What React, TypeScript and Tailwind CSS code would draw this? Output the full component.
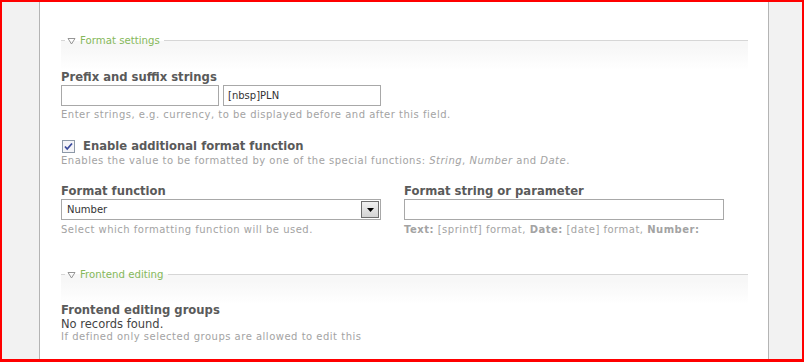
import React from 'react';

const font = { fontFamily: '"DejaVu Sans", Verdana, sans-serif' };

function Legend({ title }: { title: string }) {
  return (
    <div>
      <div className="flex items-center h-[13px] bg-[linear-gradient(to_bottom,transparent_50%,#f7f7f7_50%)]">
        <span className="w-[4px] h-px bg-[#d6d6d6]" />
        <svg width="9" height="8" viewBox="0 0 9 8" className="ml-[2px] mr-[4px]">
          <polygon points="1,1.5 8,1.5 4.5,7" fill="none" stroke="#8a8a8a" strokeWidth="0.9" />
        </svg>
        <span className="text-[10.2px] leading-[13px] text-[#86b85a] pr-[4px]">{title}</span>
        <span className="flex-1 h-px bg-[#d6d6d6]" />
      </div>
      <div className="h-[23px] bg-gradient-to-b from-[#f7f7f7] to-white" />
    </div>
  );
}

const label = 'text-[11.6px] leading-[14px] font-bold text-[#5a5a5a]';
const desc = 'text-[10px] tracking-[0.5px] leading-[12px] text-[#a3a3a3] whitespace-nowrap';
const input = 'h-[21px] border border-[#a8a8a8] bg-white text-[10px] text-[#333] px-[4px] flex items-center';

export default function App() {
  return (
    <div style={font} className="w-[804px] h-[362px] flex border-l-2 border-t-2 border-r-2 border-b-[3px] border-[#ff0000] overflow-hidden">
      <div className="w-[38px] bg-[#f2f2f2] border-r border-[#b4b4b4]" />
      <div className="flex-1 bg-white pl-[21px] pr-[20px] pt-[32px]">
        <Legend title="Format settings" />

        <div className={label}>Prefix and suffix strings</div>
        <div className="flex gap-[4px] mt-[1px]">
          <div className={`${input} w-[158px]`} />
          <div className={`${input} w-[158px]`}>[nbsp]PLN</div>
        </div>
        <div className={`${desc} mt-[3px]`}>Enter strings, e.g. currency, to be displayed before and after this field.</div>

        <div className="flex items-center gap-[8px] mt-[18px] h-[14px]">
          <svg width="13" height="13" viewBox="0 0 13 13" className="ml-px">
            <rect x="0.5" y="0.5" width="12" height="12" fill="#f4f4f8" stroke="#8d99a8" />
            <path d="M3 6.5 L5.2 9 L10 3.5" fill="none" stroke="#3a4a9c" strokeWidth="1.8" />
          </svg>
          <span className={label}>Enable additional format function</span>
        </div>
        <div className={`${desc} mt-[2px]`}>
          Enables the value to be formatted by one of the special functions: <i>String</i>, <i>Number</i> and <i>Date</i>.
        </div>

        <div className="flex gap-[23px] mt-[17px]">
          <div className="w-[320px]">
            <div className={label}>Format function</div>
            <div className={`${input} mt-[1px] justify-between pl-[5px] pr-[1px]`}>
              <span>Number</span>
              <span className="w-[18px] h-[17px] border border-[#6e6e6e] bg-[linear-gradient(to_bottom,#f0f0f0,#d4d4d4)] flex items-center justify-center">
                <svg width="7" height="4" viewBox="0 0 7 4">
                  <polygon points="0,0 7,0 3.5,4" fill="#000" />
                </svg>
              </span>
            </div>
            <div className={`${desc} mt-[4px]`}>Select which formatting function will be used.</div>
          </div>
          <div className="w-[320px]">
            <div className={label}>Format string or parameter</div>
            <div className={`${input} mt-[1px]`} />
            <div className={`${desc} mt-[4px]`}>
              <b>Text:</b> [sprintf] format, <b>Date:</b> [date] format, <b>Number:</b>
            </div>
          </div>
        </div>

        <div className="mt-[32px]">
          <Legend title="Frontend editing" />
        </div>
        <div className={`${label} -mt-px`}>Frontend editing groups</div>
        <div className="text-[11.5px] leading-[14px] text-[#444]">No records found.</div>
        <div className={desc}>If defined only selected groups are allowed to edit this</div>
      </div>
      <div className="w-[34px] bg-[#f2f2f2] border-l border-[#b4b4b4]" />
    </div>
  );
}
